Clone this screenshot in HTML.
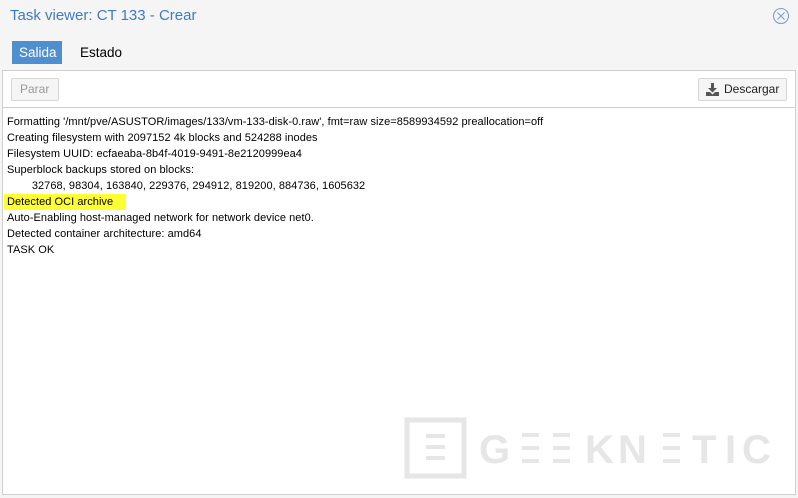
<!DOCTYPE html>
<html><head><meta charset="utf-8"><style>
*{margin:0;padding:0;box-sizing:border-box}
body{width:798px;height:498px;background:#f5f5f5;font-family:"Liberation Sans",Arial,sans-serif;position:relative;overflow:hidden}
.title{position:absolute;left:10px;top:7px;font-size:15px;color:#3d7cc4}
.close{position:absolute;left:772px;top:7px}
.tab{position:absolute;top:41px;height:23px;font-size:13.5px;line-height:23px;padding:0 7px}
.t1{left:12px;background:#4f8fd0;color:#fff;width:50px}
.t2{left:73px;color:#000}
.panel{position:absolute;left:2px;top:70px;width:794px;height:425px;background:#fff;border:1px solid #cfcfcf}
.tb{position:absolute;left:0;top:0;width:100%;height:37px;border-bottom:1px solid #cfcfcf}
.btn{position:absolute;top:7px;height:23px;border:1px solid #d6d6d6;border-radius:2px;background:#f5f5f5;font-size:12px;line-height:21px;padding:0 8px}
.parar{left:8px;color:#9a9a9a;width:48px}
.desc{left:695px;color:#222;width:89px;padding-left:25px}
.log{position:absolute;left:4px;top:43px;font-size:11px;line-height:16px;color:#000;white-space:pre;letter-spacing:0.05px}
.hl{background:#ffff33;display:inline-block;width:122px;padding-left:3px;margin-left:-3px}
.wm{position:absolute;left:0;top:0}
</style></head><body>
<div class="title">Task viewer: CT 133 - Crear</div>
<svg class="close" width="18" height="18" viewBox="0 0 18 18"><circle cx="9" cy="9" r="7.5" fill="none" stroke="#7d9fd6" stroke-width="1.1"/><path d="M5.5 5.5L12.5 12.5M12.5 5.5L5.5 12.5" stroke="#7d9fd6" stroke-width="1.1"/></svg>
<div class="tab t1">Salida</div>
<div class="tab t2">Estado</div>
<div class="panel">
<div class="tb">
<div class="btn parar">Parar</div>
<div class="btn desc"><svg style="position:absolute;left:7px;top:4px" width="13" height="13" viewBox="0 0 13 13"><path d="M5 0h3v5h3l-4.5 4.5L2 5h3z" fill="#555"/><path d="M0 9h4l2.5 2.5L9 9h4v4H0z" fill="#555"/></svg>Descargar</div>
</div>
<div class="log">Formatting '/mnt/pve/ASUSTOR/images/133/vm-133-disk-0.raw', fmt=raw size=8589934592 preallocation=off
Creating filesystem with 2097152 4k blocks and 524288 inodes
Filesystem UUID: ecfaeaba-8b4f-4019-9491-8e2120999ea4
Superblock backups stored on blocks:
        32768, 98304, 163840, 229376, 294912, 819200, 884736, 1605632
<span class="hl">Detected OCI archive</span>
Auto-Enabling host-managed network for network device net0.
Detected container architecture: amd64
TASK OK</div>
</div>
<svg class="wm" width="798" height="498" viewBox="0 0 798 498">
<rect x="407" y="420" width="57" height="56" fill="none" stroke="#e6e6e6" stroke-width="5"/>
<g fill="#e6e6e6">
<rect x="426" y="434" width="19" height="4"/><rect x="426" y="445" width="19" height="4"/><rect x="426" y="456" width="19" height="4"/>
<rect x="522" y="433" width="17" height="4"/><rect x="522" y="446" width="17" height="4"/><rect x="522" y="459" width="17" height="4"/>
<rect x="553" y="433" width="17" height="4"/><rect x="553" y="446" width="17" height="4"/><rect x="553" y="459" width="17" height="4"/>
<rect x="663" y="433" width="17" height="4"/><rect x="663" y="446" width="17" height="4"/><rect x="663" y="459" width="17" height="4"/>
</g>
<g font-family="Liberation Sans,sans-serif" font-weight="bold" font-size="40" fill="#e6e6e6">
<text x="479" y="463">G</text>
<text x="585" y="463">K</text>
<text x="618" y="463">N</text>
<text x="692" y="463">T</text>
<text x="725" y="463">I</text>
<text x="742" y="463">C</text>
</g>
</svg>
</body></html>
